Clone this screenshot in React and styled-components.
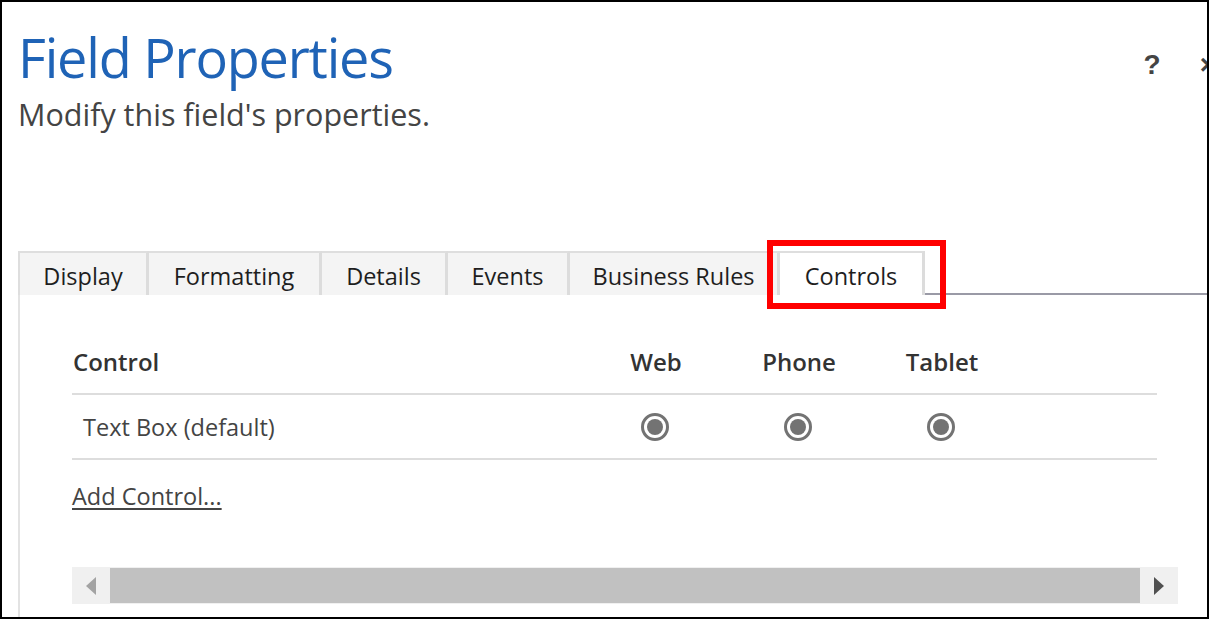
import React from 'react';
import styled, { createGlobalStyle } from 'styled-components';

const GlobalStyle = createGlobalStyle`
  html, body {
    margin: 0;
    padding: 0;
    background: #ffffff;
  }
  body {
    font-family: "Open Sans", "Noto Sans", sans-serif;
  }
`;

const tabs = [
  { label: 'Display', width: 131 },
  { label: 'Formatting', width: 173 },
  { label: 'Details', width: 126 },
  { label: 'Events', width: 122 },
  { label: 'Business Rules', width: 210 },
  { label: 'Controls', width: 145, active: true },
];

export default function App() {
  return (
    <>
      <GlobalStyle />
      <Frame>
        <Header>
          <TitleBlock>
            <Title>Field Properties</Title>
            <Subtitle>Modify this field's properties.</Subtitle>
          </TitleBlock>
          <Actions>
            <ActionButton>?</ActionButton>
            <ActionButton>×</ActionButton>
          </Actions>
        </Header>

        <TabStrip>
          {tabs.map((t, i) => (
            <Tab key={t.label} $w={t.width} $active={t.active} $first={i === 0}>
              {t.label}
            </Tab>
          ))}
          <TabFiller />
          <Highlight />
        </TabStrip>

        <Panel>
          <Table>
            <HeadCell>Control</HeadCell>
            <HeadCell $center>Web</HeadCell>
            <HeadCell $center>Phone</HeadCell>
            <HeadCell $center>Tablet</HeadCell>
            <HeadCell />

            <Cell $indent>Text Box (default)</Cell>
            <Cell $center><Radio /></Cell>
            <Cell $center><Radio /></Cell>
            <Cell $center><Radio /></Cell>
            <Cell />
          </Table>

          <AddLink href="#">Add Control...</AddLink>

          <Scrollbar>
            <ScrollButton>
              <Arrow $dir="left" />
            </ScrollButton>
            <Thumb />
            <ScrollButton>
              <Arrow $dir="right" />
            </ScrollButton>
          </Scrollbar>
        </Panel>
      </Frame>
    </>
  );
}

const Frame = styled.div`
  position: relative;
  width: 1209px;
  height: 619px;
  box-sizing: border-box;
  border: 2px solid #000000;
  overflow: hidden;
  display: flex;
  flex-direction: column;
  background: #ffffff;
`;

const Header = styled.div`
  display: flex;
  justify-content: space-between;
  align-items: flex-start;
  padding: 22px 0 0 16px;
  height: 249px;
  box-sizing: border-box;
  flex-shrink: 0;
`;

const TitleBlock = styled.div`
  display: flex;
  flex-direction: column;
`;

const Title = styled.h1`
  margin: 0;
  font-weight: 400;
  font-size: 54px;
  line-height: 66px;
  letter-spacing: -1.2px;
  color: #1f63b6;
`;

const Subtitle = styled.div`
  margin-top: 6px;
  font-size: 30.5px;
  line-height: 36px;
  letter-spacing: 0;
  color: #444444;
`;

const Actions = styled.div`
  display: flex;
  gap: 39px;
  margin-top: 24px;
  margin-right: -9px;
`;

const ActionButton = styled.span`
  font-family: "Liberation Sans", Arial, sans-serif;
  font-weight: 700;
  font-size: 28px;
  line-height: 34px;
  color: #444444;
`;

const TabStrip = styled.div`
  position: relative;
  display: flex;
  align-items: stretch;
  height: 44px;
  margin-left: 16px;
  flex-shrink: 0;
`;

const Tab = styled.div`
  width: ${(p) => p.$w}px;
  box-sizing: border-box;
  display: flex;
  align-items: center;
  justify-content: center;
  padding-top: 4px;
  font-size: 23.5px;
  color: #1e1e1e;
  background: ${(p) => (p.$active ? '#ffffff' : '#f4f4f4')};
  border-top: 2px solid #dedede;
  border-right: 3px solid #dcdcdc;
  border-left: ${(p) => (p.$first ? '2px solid #dedede' : 'none')};
`;

const TabFiller = styled.div`
  flex: 1;
  border-bottom: 2px solid #9a9aa6;
`;

const Highlight = styled.div`
  position: absolute;
  left: 749px;
  top: -11px;
  width: 179px;
  height: 69px;
  box-sizing: border-box;
  border: 6px solid #ff0000;
  pointer-events: none;
`;

const Panel = styled.div`
  flex: 1;
  margin-left: 16px;
  border-left: 2px solid #e3e3e3;
  padding: 40px 0 0 52px;
  display: flex;
  flex-direction: column;
  align-items: flex-start;
`;

const Table = styled.div`
  display: grid;
  grid-template-columns: 512px 143px 143px 143px 144px;
  width: 1085px;
`;

const HeadCell = styled.div`
  display: flex;
  align-items: center;
  justify-content: ${(p) => (p.$center ? 'center' : 'flex-start')};
  height: 60px;
  padding-left: 1px;
  padding-bottom: 5px;
  box-sizing: border-box;
  font-size: 24px;
  font-weight: 600;
  color: #333333;
  border-bottom: 2px solid #dddddd;
`;

const Cell = styled.div`
  display: flex;
  align-items: center;
  justify-content: ${(p) => (p.$center ? 'center' : 'flex-start')};
  height: 65px;
  padding-left: ${(p) => (p.$indent ? '11px' : '0')};
  box-sizing: border-box;
  font-size: 23.5px;
  color: #444444;
  border-bottom: 2px solid #dddddd;
`;

const Radio = styled.span`
  width: 28px;
  height: 28px;
  box-sizing: border-box;
  border-radius: 50%;
  border: 3px solid #737373;
  display: flex;
  align-items: center;
  justify-content: center;
  margin-left: -2px;

  &::after {
    content: '';
    width: 16px;
    height: 16px;
    border-radius: 50%;
    background: #737373;
  }
`;

const AddLink = styled.a`
  margin-top: 22px;
  font-size: 23.5px;
  line-height: 28px;
  color: #444444;
  text-decoration: underline;
  text-underline-offset: 3px;
`;

const Scrollbar = styled.div`
  margin-top: 57px;
  width: 1106px;
  height: 37px;
  flex-shrink: 0;
  display: flex;
  background: #f0f0f0;
`;

const ScrollButton = styled.div`
  width: 38px;
  display: flex;
  align-items: center;
  justify-content: center;
`;

const Thumb = styled.div`
  flex: 1;
  margin: 1px 0;
  background: #c1c1c1;
`;

const Arrow = styled.span`
  width: 0;
  height: 0;
  border-top: 9px solid transparent;
  border-bottom: 9px solid transparent;
  ${(p) =>
    p.$dir === 'left'
      ? 'border-right: 10px solid #a3a3a3;'
      : 'border-left: 10px solid #505050;'}
`;
